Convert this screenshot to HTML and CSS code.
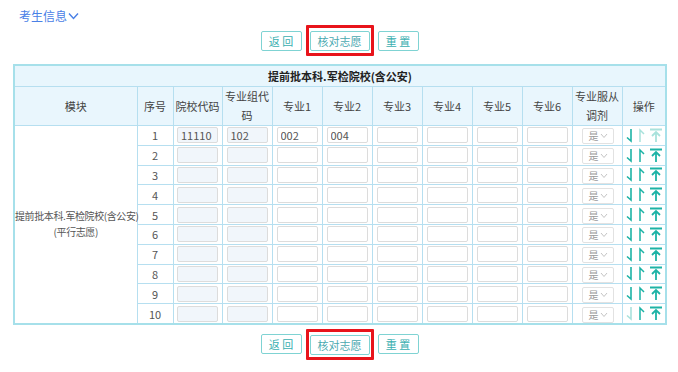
FILE: index.html
```html
<!DOCTYPE html>
<html lang="zh-CN">
<head>
    <meta charset="UTF-8" />
    <meta name="viewport" content="width=device-width, initial-scale=1.0" />
    <title>志愿填报</title>
    <link rel="stylesheet" href="styles.css">
</head>
<body>
    <div class="info-link">考生信息<svg class="chev" width="11" height="8" viewBox="0 0 11 8"><path d="M1 1.5 L5.5 6.5 L10 1.5" fill="none" stroke="#4a80e6" stroke-width="1.4"/></svg></div>

    <div class="btn-bar">
        <button class="btn">返 回</button>
        <span class="mark"><button class="btn wide">核对志愿</button></span>
        <button class="btn">重 置</button>
    </div>

    <table class="wish-table">
        <colgroup>
            <col style="width:123px"><col style="width:36px"><col style="width:49px"><col style="width:50px">
            <col style="width:50px"><col style="width:50px"><col style="width:50px"><col style="width:50px">
            <col style="width:50px"><col style="width:50px"><col style="width:50px"><col style="width:44px">
        </colgroup>
        <thead>
            <tr class="title-row"><th colspan="12">提前批本科.军检院校(含公安)</th></tr>
            <tr class="head-row">
                <th>模块</th><th>序号</th><th>院校代码</th><th>专业组代<br>码</th>
                <th>专业1</th><th>专业2</th><th>专业3</th><th>专业4</th><th>专业5</th><th>专业6</th>
                <th>专业服从<br>调剂</th><th>操作</th>
            </tr>
        </thead>
        <tbody id="rows"></tbody>
    </table>

    <div class="btn-bar bottom">
        <button class="btn">返 回</button>
        <span class="mark"><button class="btn wide">核对志愿</button></span>
        <button class="btn">重 置</button>
    </div>

    <script>
        const firstRow = ['11110', '102', '002', '004', '', '', '', ''];
        const body = document.getElementById('rows');

        const iconDown = (off) => `<svg class="ico${off ? ' off' : ''}" width="9" height="15" viewBox="0 0 9 15"><path d="M6 1 V13 L2 9.5" fill="none" stroke-width="1.6"/></svg>`;
        const iconUp = (off) => `<svg class="ico${off ? ' off' : ''}" width="8" height="15" viewBox="0 0 8 15"><path d="M2 14 V2 L6 6" fill="none" stroke-width="1.5"/></svg>`;
        const iconTop = (off) => `<svg class="ico${off ? ' off' : ''}" width="12" height="15" viewBox="0 0 12 15"><path d="M0 1.5 H12 M6 14 V4 M2 8 L6 4 L10 8" fill="none" stroke-width="1.8"/></svg>`;

        for (let i = 1; i <= 10; i++) {
            const vals = i === 1 ? firstRow : ['', '', '', '', '', '', '', ''];
            let html = '';
            if (i === 1) {
                html += '<td class="module" rowspan="10">提前批本科.军检院校(含公安)<br>(平行志愿)</td>';
            }
            html += `<td class="num">${i}</td>`;
            vals.forEach((v, k) => {
                const cls = k < 2 ? 'cell-input locked' : 'cell-input';
                html += `<td><input class="${cls}" value="${v}"${k < 2 ? ' readonly' : ''}></td>`;
            });
            html += '<td><span class="pick">是<svg width="8" height="6" viewBox="0 0 8 6"><path d="M1 1 L4 4.5 L7 1" fill="none" stroke="#c4c4c4" stroke-width="1"/></svg></span></td>';
            html += `<td class="ops">${iconDown(i === 10)}${iconUp(i === 1)}${iconTop(i === 1)}</td>`;
            const tr = document.createElement('tr');
            tr.innerHTML = html;
            body.appendChild(tr);
        }
    </script>
</body>
</html>
```

FILE: styles.css
```css
body {
    margin: 0;
    font-family: "Noto Sans CJK SC", "Noto Sans", sans-serif;
    font-size: 11px;
    color: #555;
    background: #fff;
}

.info-link {
    padding: 6px 0 0 19px;
    height: 19px;
    font-size: 12px;
    color: #4a80e6;
    display: flex;
    align-items: center;
}

.chev {
    margin-left: 1px;
}

.btn-bar {
    display: flex;
    justify-content: center;
    align-items: center;
    gap: 4px;
    height: 31px;
    margin-left: 1px;
}

.btn-bar.bottom {
    margin-top: 4px;
}

.btn {
    height: 20px;
    width: 41px;
    padding: 0;
    border: 1px solid #7fd3d3;
    border-radius: 2px;
    background: #fff;
    color: #3aafb0;
    font-family: inherit;
    font-size: 11px;
    line-height: 18px;
}

.btn.wide {
    width: 60px;
    color: #4aa9b0;
}

.mark {
    display: flex;
    padding: 3px 1px 2px;
    border: 3px solid #e8141b;
    border-radius: 1px;
}

.wish-table {
    margin: 8px 13px 0;
    width: 652px;
    table-layout: fixed;
    border-collapse: collapse;
    border: 2px solid #a6e0ea;
}

.wish-table th,
.wish-table td {
    border: 1px solid #b6dff0;
    padding: 0;
    text-align: center;
    font-weight: normal;
}

.title-row th {
    height: 20px;
    background: #e8f6fd;
    color: #222;
    font-weight: bold;
    font-size: 11px;
    line-height: 20px;
}

.head-row th {
    height: 38px;
    background: #e9f6fd;
    color: #444;
    line-height: 19px;
    white-space: nowrap;
}

.wish-table td {
    height: 18.8px;
    line-height: 16px;
}

.module {
    color: #555;
    line-height: 16px;
    white-space: nowrap;
    font-size: 10px;
    letter-spacing: -0.4px;
}

.num {
    color: #555;
}

.cell-input {
    display: block;
    box-sizing: border-box;
    width: 41px;
    height: 16px;
    margin: 0 auto;
    padding: 0 3px;
    border: 1px solid #dcdcdc;
    border-radius: 2px;
    font-family: inherit;
    font-size: 11px;
    color: #555;
    background: #fff;
    outline: none;
}

.cell-input.locked {
    background: #f1f6fb;
}

.pick {
    display: inline-flex;
    align-items: center;
    justify-content: center;
    gap: 1px;
    box-sizing: border-box;
    width: 32px;
    height: 16px;
    border: 1px solid #e2e2e2;
    border-radius: 2px;
    color: #999;
    font-size: 10px;
    margin-left: 2px;
    vertical-align: middle;
}

.ops {
    white-space: nowrap;
    font-size: 0;
}

.ico {
    vertical-align: middle;
    stroke: #1db3a6;
    margin: 0 2px;
}

.ico.off {
    stroke: #a9e2dc;
}
```
